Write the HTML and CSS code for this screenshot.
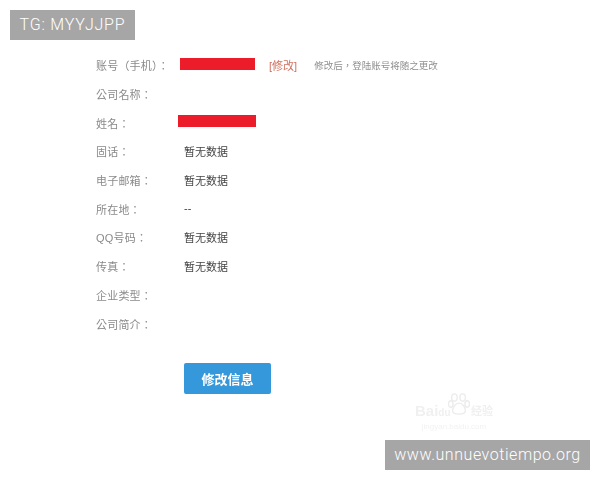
FILE: index.html
```html
<!DOCTYPE html>
<html>
  <head>
    <meta charset="utf-8">
    <link rel="stylesheet" href="styles.css">
  </head>

  <body>
    <div class="tag tag-top">TG: MYYJJPP</div>

    <div class="profile">
      <div class="row">
        <span class="label">账号（手机）：</span>
        <span class="redact redact-phone"></span>
        <a class="edit-link">[修改]</a>
        <span class="hint">修改后，登陆账号将随之更改</span>
      </div>
      <div class="row"><span class="label">公司名称：</span></div>
      <div class="row">
        <span class="label">姓名：</span>
        <span class="redact redact-name"></span>
      </div>
      <div class="row"><span class="label">固话：</span><span class="value">暂无数据</span></div>
      <div class="row"><span class="label">电子邮箱：</span><span class="value">暂无数据</span></div>
      <div class="row"><span class="label">所在地：</span><span class="value">--</span></div>
      <div class="row"><span class="label">QQ号码：</span><span class="value">暂无数据</span></div>
      <div class="row"><span class="label">传真：</span><span class="value">暂无数据</span></div>
      <div class="row"><span class="label">企业类型：</span></div>
      <div class="row"><span class="label">公司简介：</span></div>
      <button type="button" class="save-button">修改信息</button>
    </div>

    <div class="baidu-mark">
      <svg class="paw" width="22" height="24" viewBox="0 0 24 26">
        <ellipse cx="7" cy="6" rx="3" ry="4"/>
        <ellipse cx="16" cy="6" rx="3" ry="4"/>
        <ellipse cx="3" cy="13" rx="2.5" ry="3.5"/>
        <ellipse cx="21" cy="13" rx="2.5" ry="3.5"/>
        <path d="M12 12c-4 0-7 5-7 8 0 3 3 4 7 4s7-1 7-4c0-3-3-8-7-8z"/>
      </svg>
      <div class="baidu-name">
        <span>Bai<span class="baidu-du">du</span></span>
        <span class="baidu-cn">经验</span>
      </div>
      <div class="baidu-url">jingyan.baidu.com</div>
    </div>

    <div class="tag tag-bottom">www.unnuevotiempo.org</div>
  </body>
</html>
```

FILE: styles.css
```css
body {
  margin: 0;
  width: 600px;
  height: 480px;
  overflow: hidden;
  position: relative;
  background-color: #fff;
  font-family: "Liberation Sans", "Noto Sans CJK TC", sans-serif;
}

.tag {
  position: absolute;
  height: 30px;
  line-height: 30px;
  background-color: #a6a6a6;
  color: #fff;
  font-family: Roboto, sans-serif;
  font-size: 16px;
  font-weight: 300;
  text-align: center;
}

.tag-top {
  left: 10px;
  top: 10px;
  width: 125px;
  letter-spacing: 0.8px;
}

.tag-bottom {
  left: 385px;
  top: 440px;
  width: 205px;
  letter-spacing: 0.55px;
}

.profile {
  padding: 51px 0 0 96px;
  filter: blur(0.5px);
}

.row {
  display: flex;
  align-items: center;
  height: 28.7px;
  font-size: 11px;
}

.label {
  width: 88px;
  flex: none;
  color: #8a8a8a;
  letter-spacing: 0.2px;
}

.value {
  margin-top: -1px;
  color: #444;
}

.redact {
  display: block;
  height: 12px;
  background-color: #ed1c2b;
}

.redact-phone {
  width: 75px;
  margin-left: -4px;
  margin-top: -2px;
}

.redact-name {
  width: 78px;
  margin-left: -6px;
  margin-top: -4px;
}

.edit-link {
  margin-left: 14px;
  color: #d0705f;
  font-size: 11px;
}

.hint {
  margin-left: 17px;
  color: #8f8f8f;
  font-size: 9.5px;
}

.save-button {
  display: block;
  width: 87px;
  height: 31px;
  margin: 25px 0 0 88px;
  padding: 0;
  border: none;
  border-radius: 2px;
  background-color: #3498db;
  color: #fff;
  font-family: inherit;
  font-size: 13px;
  font-weight: bold;
}

.baidu-mark {
  position: absolute;
  left: 415px;
  top: 392px;
  width: 78px;
  color: #f0f0f0;
  filter: blur(0.5px);
}

.paw {
  position: absolute;
  left: 33px;
  top: 0;
  fill: none;
  stroke: #ececec;
  stroke-width: 1.5;
}

.baidu-name {
  display: flex;
  justify-content: space-between;
  margin-top: 11px;
  font-size: 15px;
  font-weight: bold;
  line-height: 16px;
  white-space: nowrap;
}

.baidu-du {
  font-size: 10px;
}

.baidu-cn {
  font-size: 11px;
}

.baidu-url {
  font-size: 8px;
  line-height: 12px;
  text-align: center;
  color: #f2f2f2;
}
```
